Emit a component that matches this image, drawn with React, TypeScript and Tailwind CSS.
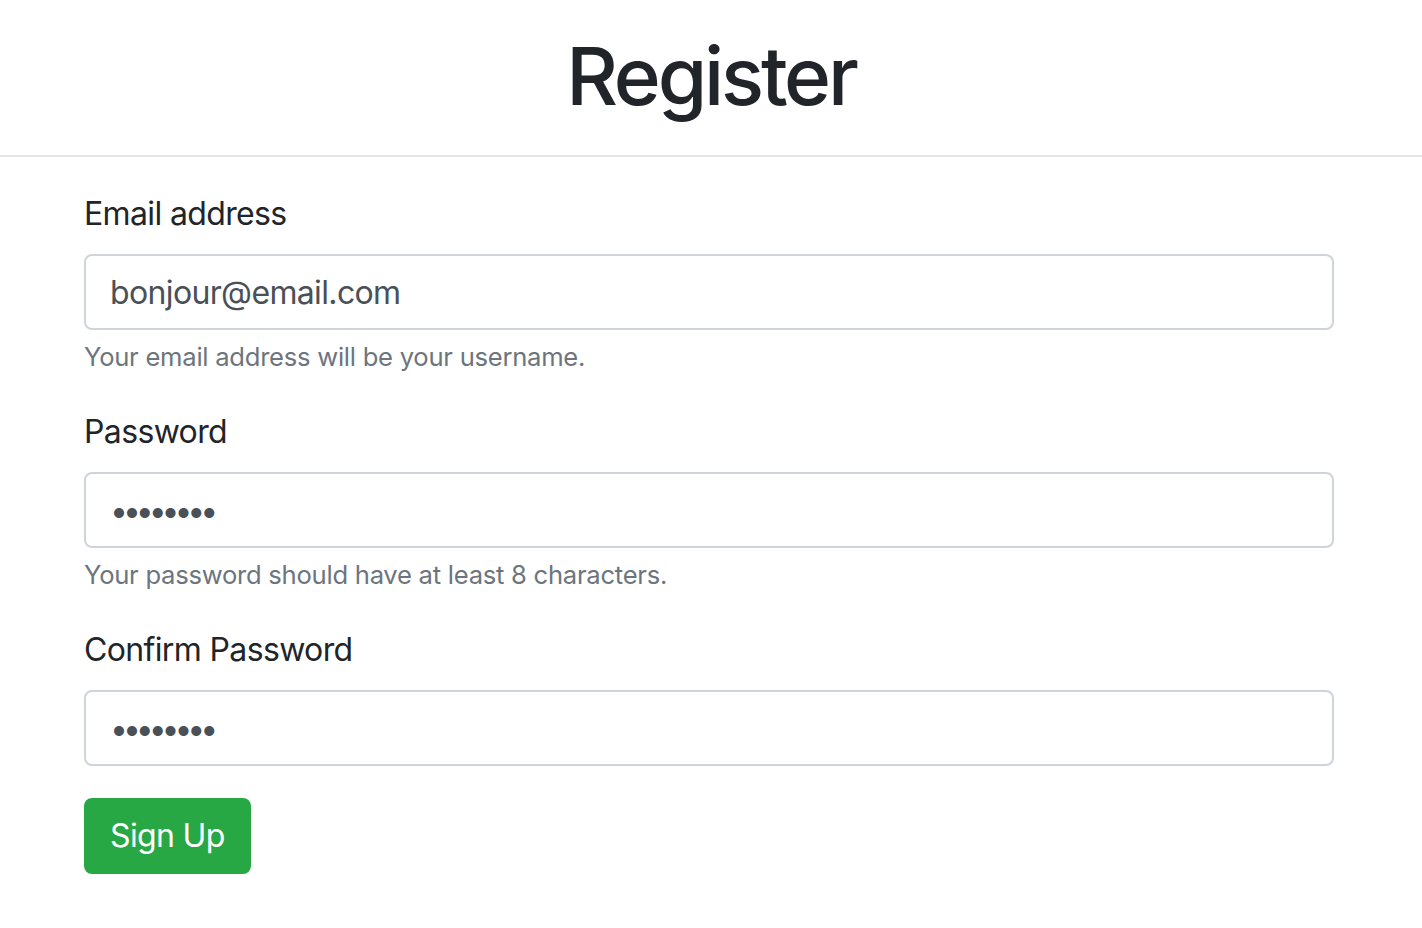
import { useState } from "react";

const Field = ({
  id,
  label,
  type,
  value,
  help,
  onChange,
}: {
  id: string;
  label: string;
  type: string;
  value: string;
  help?: string;
  onChange: (v: string) => void;
}) => (
  <div className="mb-8">
    <label htmlFor={id} className="block mb-4 text-[32px] leading-[48px] tracking-[-0.02em] text-[#212529]">
      {label}
    </label>
    <input
      id={id}
      type={type}
      value={value}
      onChange={(e) => onChange(e.target.value)}
      className={
        type === "password"
          ? "block w-full h-[76px] px-6 text-[32px] tracking-[-0.16em] text-[#495057] bg-white border-2 border-[#ced4da] rounded-lg outline-none"
          : "block w-full h-[76px] px-6 text-[32px] tracking-[-0.02em] text-[#495057] bg-white border-2 border-[#ced4da] rounded-lg outline-none"
      }
    />
    {help && (
      <small className="block mt-2 text-[25.6px] leading-[38px] tracking-[-0.01em] text-[#6c757d]">{help}</small>
    )}
  </div>
);

const App = () => {
  const [email, setEmail] = useState("bonjour@email.com");
  const [password, setPassword] = useState("12345678");
  const [confirm, setConfirm] = useState("12345678");

  return (
    <div className="min-h-screen bg-white font-['Inter','Liberation_Sans',sans-serif] text-[#212529]">
      {/* Header */}
      <header className="h-[157px] flex items-center justify-center border-b-2 border-[#e5e5e5]">
        <h1 className="text-[80px] leading-none font-medium tracking-[-0.04em] pb-1">Register</h1>
      </header>

      {/* Form */}
      <form className="px-[84px] pt-[33px]" onSubmit={(e) => e.preventDefault()}>
        <div className="w-[1250px]">
          <Field
            id="email"
            label="Email address"
            type="email"
            value={email}
            onChange={setEmail}
            help="Your email address will be your username."
          />
          <Field
            id="password"
            label="Password"
            type="password"
            value={password}
            onChange={setPassword}
            help="Your password should have at least 8 characters."
          />
          <Field
            id="confirm"
            label="Confirm Password"
            type="password"
            value={confirm}
            onChange={setConfirm}
          />
          <button
            type="submit"
            className="h-[76px] px-6 text-[32px] tracking-[-0.02em] text-white bg-[#28a745] border-2 border-[#28a745] rounded-lg"
          >
            Sign Up
          </button>
        </div>
      </form>
    </div>
  );
};

export default App;
